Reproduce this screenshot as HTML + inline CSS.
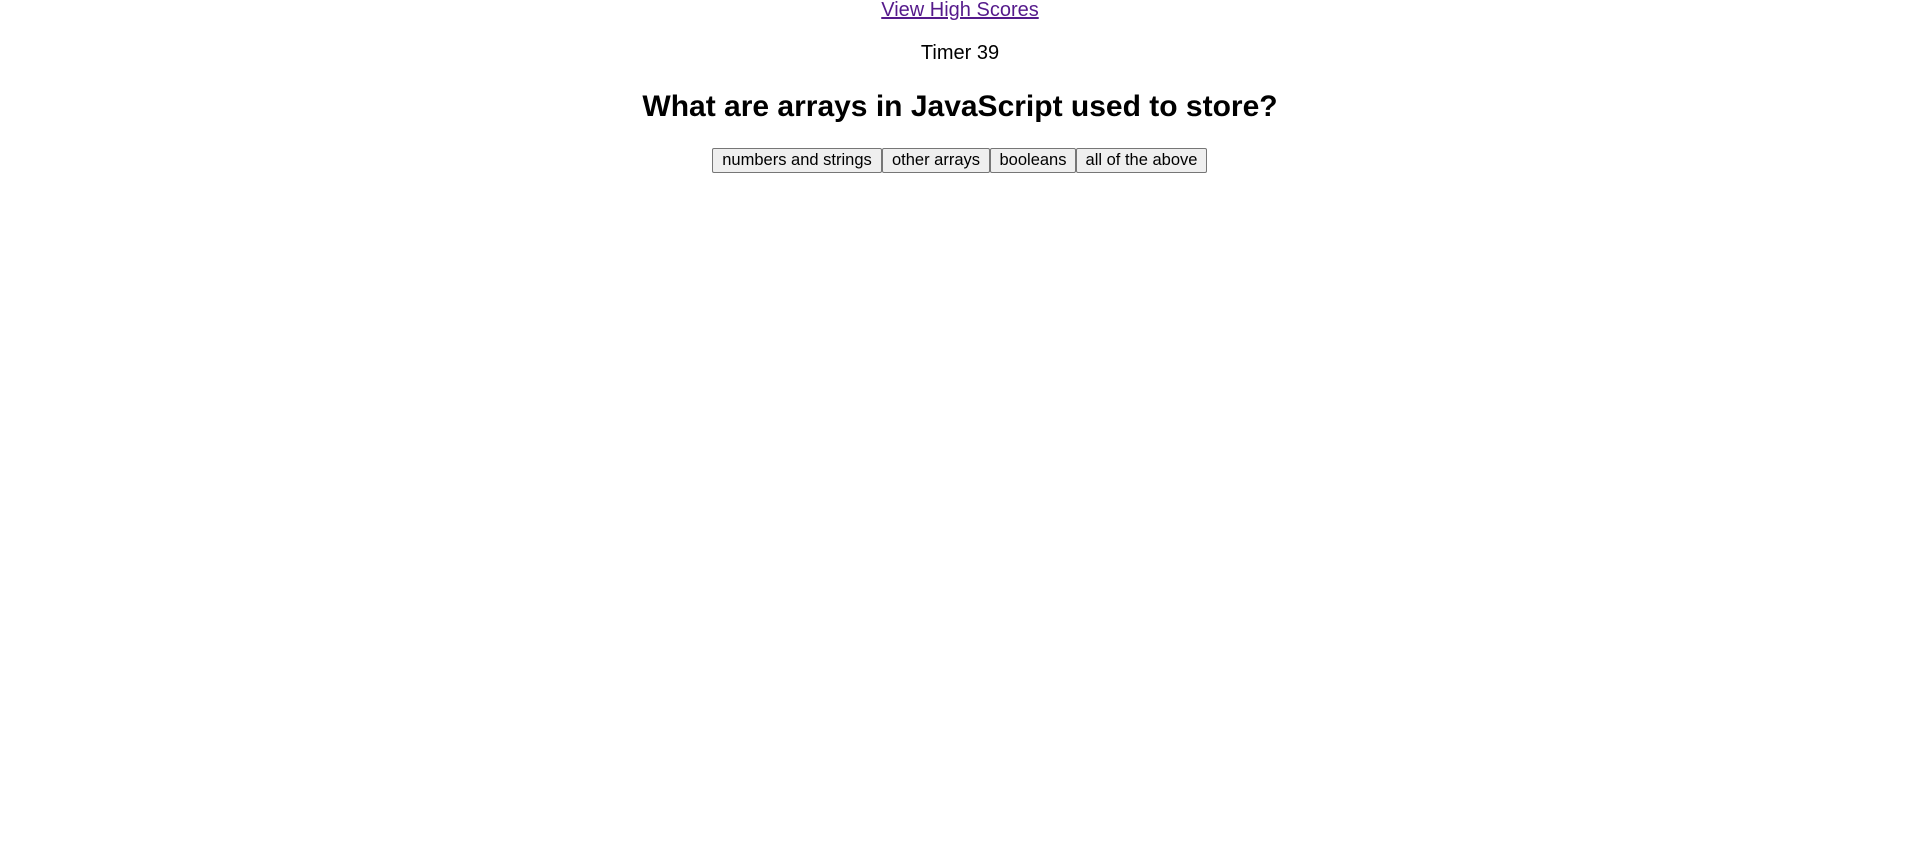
<!DOCTYPE html>
<html><head><meta charset="utf-8"><style>
html,body{margin:0;padding:0;background:#fff;width:1920px;height:858px;overflow:hidden;font-family:"Liberation Sans",Arial,sans-serif;}
.a{position:absolute;left:0;width:1920px;text-align:center;white-space:nowrap}
a{color:#551a8b;text-decoration:underline;font-size:20px}
#link{top:-1px;line-height:23px}
#timer{top:42px;font-size:20px;line-height:23px;color:#000}
h2{margin:0;top:90px;font-size:30px;line-height:34px;font-weight:bold;color:#000}
#btns{position:absolute;top:148px;left:712px;display:flex;height:25px}
button{font-family:"Liberation Sans",Arial,sans-serif;font-size:16.5px;height:25px;padding:0;margin:0;background:#efefef;border:1px solid #767676;border-radius:2px;color:#000;box-sizing:border-box}
</style></head><body>
<div class="a" id="link"><a href="#">View High Scores</a></div>
<div class="a" id="timer">Timer 39</div>
<h2 class="a">What are arrays in JavaScript used to store?</h2>
<div id="btns">
<button style="width:170px">numbers and strings</button>
<button style="width:108px">other arrays</button>
<button style="width:86px">booleans</button>
<button style="width:131px">all of the above</button>
</div>
</body></html>
